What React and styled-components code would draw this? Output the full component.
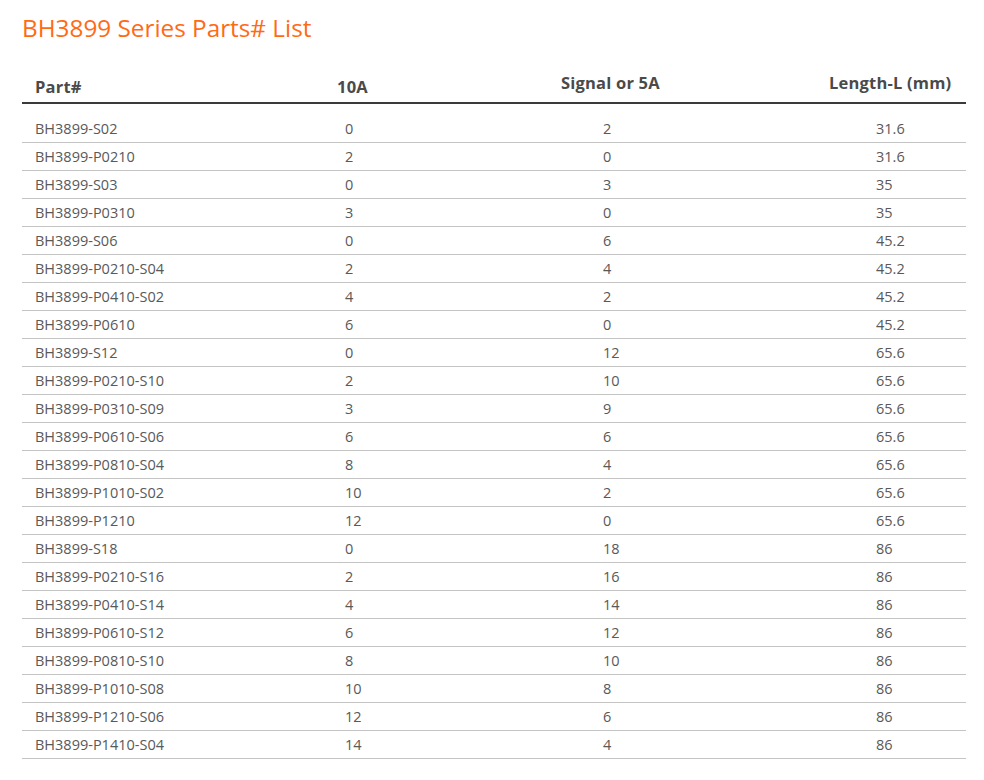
import React from "react";
import styled, { createGlobalStyle } from "styled-components";

const GlobalStyle = createGlobalStyle`
  html, body { margin: 0; padding: 0; background: #ffffff; }
  body { font-family: "Open Sans", "Liberation Sans", sans-serif; }
`;

const Page = styled.div`
  padding: 12px 0 0 22px;
  width: 944px;
`;

const Title = styled.h1`
  margin: 0;
  font-size: 24.3px;
  line-height: 32px;
  font-weight: 400;
  color: #ff6a14;
`;

const COLS = "323px 258px 273px 90px";

const HeaderRow = styled.div`
  display: grid;
  grid-template-columns: ${COLS};
  align-items: end;
  height: 58px;
  border-bottom: 2px solid #3a3a3a;
`;

const HeadCell = styled.div`
  font-size: 16.5px;
  letter-spacing: 0.2px;
  font-weight: 700;
  line-height: 20px;
  color: #4a4a4a;
  padding-left: ${(p) => p.$pad || 0}px;
  margin-left: ${(p) => p.$shift || 0}px;
  padding-bottom: ${(p) => p.$lift || 0}px;
  white-space: nowrap;
`;

const Body = styled.div`
  padding-top: 11px;
`;

const Row = styled.div`
  display: grid;
  grid-template-columns: ${COLS};
  height: 28px;
  box-sizing: border-box;
  border-bottom: 1px solid #c4c4c4;
  align-items: center;
`;

const Cell = styled.div`
  font-size: 14.5px;
  line-height: 27px;
  color: #595959;
  padding-left: ${(p) => p.$pad || 0}px;
  white-space: nowrap;
`;

const rows = [
  ["BH3899-S02", "0", "2", "31.6"],
  ["BH3899-P0210", "2", "0", "31.6"],
  ["BH3899-S03", "0", "3", "35"],
  ["BH3899-P0310", "3", "0", "35"],
  ["BH3899-S06", "0", "6", "45.2"],
  ["BH3899-P0210-S04", "2", "4", "45.2"],
  ["BH3899-P0410-S02", "4", "2", "45.2"],
  ["BH3899-P0610", "6", "0", "45.2"],
  ["BH3899-S12", "0", "12", "65.6"],
  ["BH3899-P0210-S10", "2", "10", "65.6"],
  ["BH3899-P0310-S09", "3", "9", "65.6"],
  ["BH3899-P0610-S06", "6", "6", "65.6"],
  ["BH3899-P0810-S04", "8", "4", "65.6"],
  ["BH3899-P1010-S02", "10", "2", "65.6"],
  ["BH3899-P1210", "12", "0", "65.6"],
  ["BH3899-S18", "0", "18", "86"],
  ["BH3899-P0210-S16", "2", "16", "86"],
  ["BH3899-P0410-S14", "4", "14", "86"],
  ["BH3899-P0610-S12", "6", "12", "86"],
  ["BH3899-P0810-S10", "8", "10", "86"],
  ["BH3899-P1010-S08", "10", "8", "86"],
  ["BH3899-P1210-S06", "12", "6", "86"],
  ["BH3899-P1410-S04", "14", "4", "86"],
];

export default function App() {
  return (
    <>
      <GlobalStyle />
      <Page>
        <Title>BH3899 Series Parts# List</Title>
        <HeaderRow>
          <HeadCell $pad={13} $lift={5}>Part#</HeadCell>
          <HeadCell $shift={-8} $lift={5}>10A</HeadCell>
          <HeadCell $shift={-42} $lift={9}>Signal or 5A</HeadCell>
          <HeadCell $shift={-47} $lift={9}>Length-L (mm)</HeadCell>
        </HeaderRow>
        <Body>
          {rows.map((r) => (
            <Row key={r[0]}>
              <Cell $pad={13}>{r[0]}</Cell>
              <Cell>{r[1]}</Cell>
              <Cell>{r[2]}</Cell>
              <Cell>{r[3]}</Cell>
            </Row>
          ))}
        </Body>
      </Page>
    </>
  );
}
